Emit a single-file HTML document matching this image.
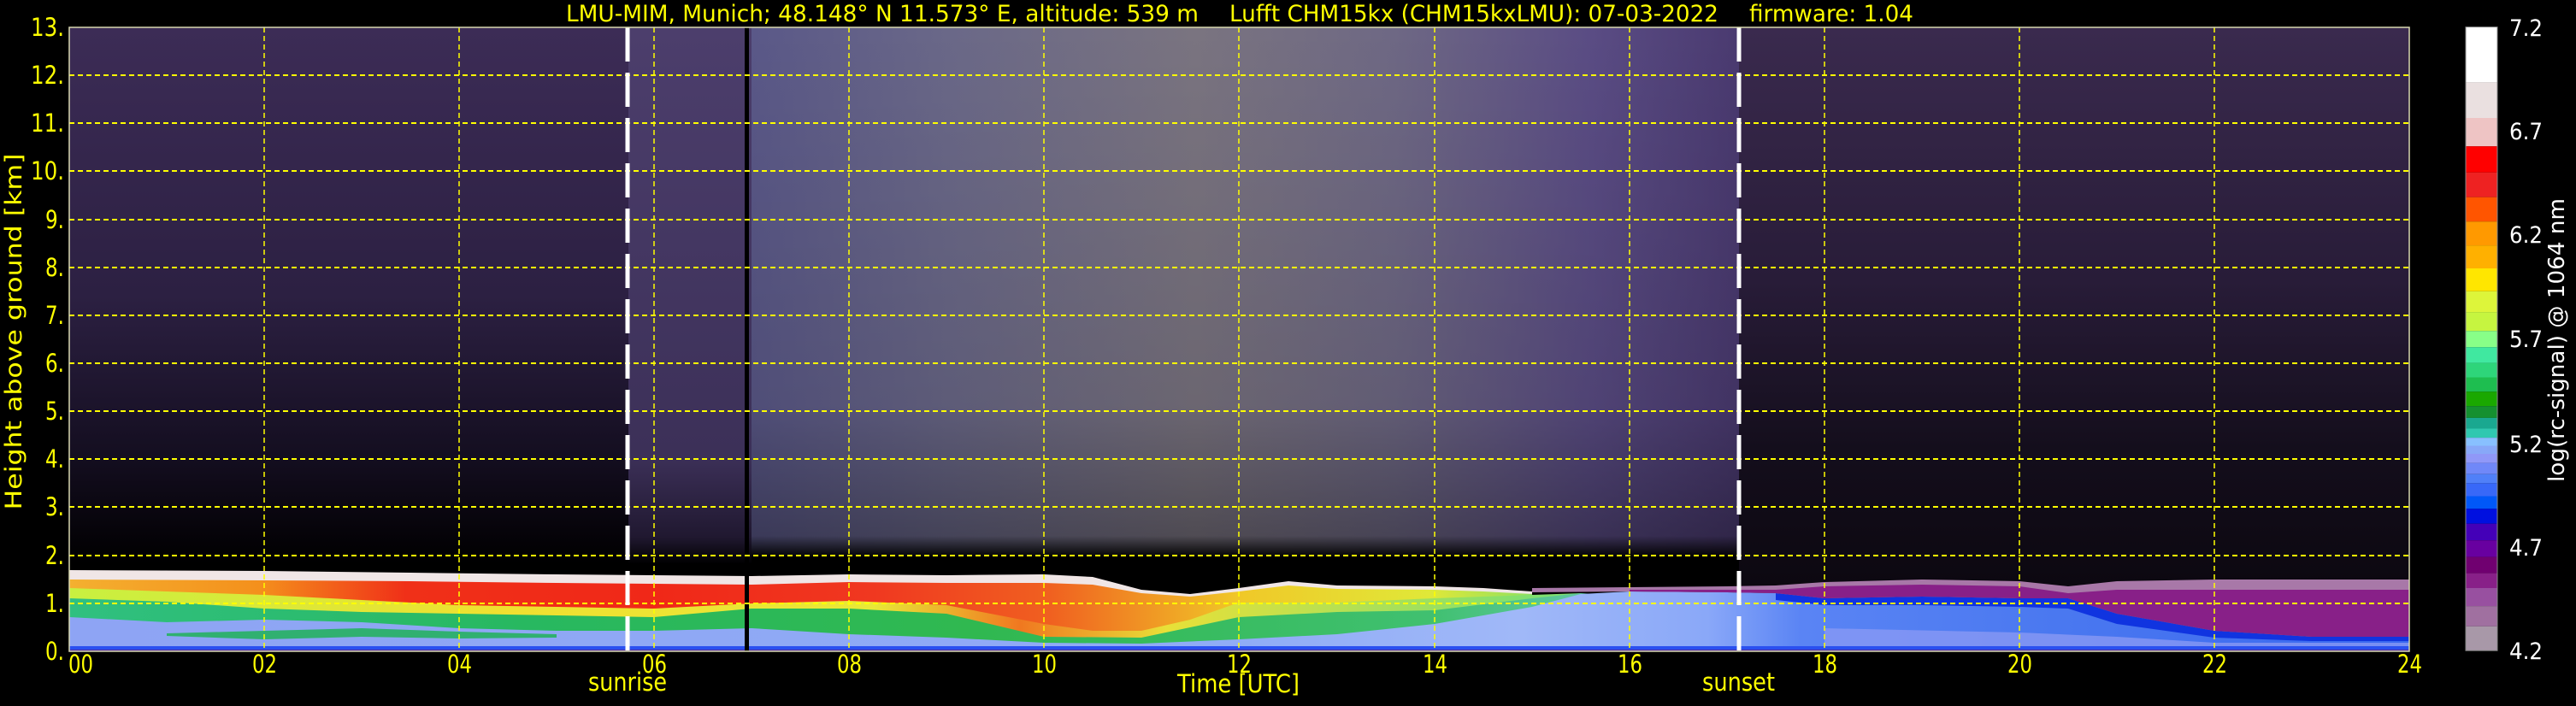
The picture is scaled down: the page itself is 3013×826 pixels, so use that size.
<!DOCTYPE html>
<html><head><meta charset="utf-8"><style>
html,body{margin:0;padding:0;background:#000;width:3013px;height:826px;overflow:hidden}
svg{display:block}
text{font-family:"DejaVu Sans","Liberation Sans",sans-serif}
</style></head><body>
<svg width="3013" height="826" viewBox="0 0 3013 826" xmlns="http://www.w3.org/2000/svg">
<defs>
<linearGradient id="mid" x1="879" x2="2034" y1="0" y2="0" gradientUnits="userSpaceOnUse">
<stop offset="0" stop-color="#5a5888"/><stop offset="0.2" stop-color="#6a6888"/>
<stop offset="0.45" stop-color="#7a7480"/><stop offset="0.65" stop-color="#6e6884"/>
<stop offset="0.85" stop-color="#5a4c84"/><stop offset="1" stop-color="#4a3a70"/>
</linearGradient>
<linearGradient id="vdark" x1="0" x2="0" y1="32" y2="665" gradientUnits="userSpaceOnUse">
<stop offset="0" stop-color="#000" stop-opacity="0"/><stop offset="0.7" stop-color="#000" stop-opacity="0.12"/>
<stop offset="0.94" stop-color="#000" stop-opacity="0.35"/><stop offset="0.98" stop-color="#000" stop-opacity="1"/>
<stop offset="1" stop-color="#000" stop-opacity="1"/>
</linearGradient>
<linearGradient id="night" x1="0" x2="0" y1="32" y2="660" gradientUnits="userSpaceOnUse">
<stop offset="0" stop-color="#3c2c56"/><stop offset="0.5" stop-color="#2c2042"/>
<stop offset="0.8" stop-color="#140e20"/><stop offset="0.95" stop-color="#050308"/><stop offset="1" stop-color="#000"/>
</linearGradient>
<linearGradient id="dawn" x1="0" x2="0" y1="32" y2="660" gradientUnits="userSpaceOnUse">
<stop offset="0" stop-color="#4c3e6c"/><stop offset="0.8" stop-color="#3c3058"/>
<stop offset="0.95" stop-color="#201830"/><stop offset="1" stop-color="#000"/>
</linearGradient>
<linearGradient id="eve" x1="0" x2="0" y1="32" y2="690" gradientUnits="userSpaceOnUse">
<stop offset="0" stop-color="#3a2a4e"/><stop offset="0.45" stop-color="#281c38"/>
<stop offset="0.75" stop-color="#140e1c"/><stop offset="1" stop-color="#0c0810"/>
</linearGradient>
<linearGradient id="red" x1="81" x2="1792" y1="0" y2="0" gradientUnits="userSpaceOnUse">
<stop offset="0" stop-color="#f4b030"/><stop offset="0.13" stop-color="#f4901c"/>
<stop offset="0.23" stop-color="#f03018"/><stop offset="0.4" stop-color="#f02818"/>
<stop offset="0.55" stop-color="#f03820"/><stop offset="0.67" stop-color="#f06020"/>
<stop offset="0.8" stop-color="#f0c828"/><stop offset="0.93" stop-color="#e0e838"/>
<stop offset="1" stop-color="#90e060"/>
</linearGradient>
<linearGradient id="yel" x1="81" x2="1792" y1="0" y2="0" gradientUnits="userSpaceOnUse">
<stop offset="0" stop-color="#c8f040"/><stop offset="0.3" stop-color="#f0e030"/>
<stop offset="0.55" stop-color="#e8e838"/><stop offset="0.65" stop-color="#f07820"/>
<stop offset="0.75" stop-color="#e8e038"/><stop offset="1" stop-color="#80e070"/>
</linearGradient>
<linearGradient id="grn" x1="81" x2="1850" y1="0" y2="0" gradientUnits="userSpaceOnUse">
<stop offset="0" stop-color="#30c080"/><stop offset="0.3" stop-color="#28b860"/>
<stop offset="0.6" stop-color="#30b850"/><stop offset="0.9" stop-color="#40c070"/><stop offset="1" stop-color="#60c8a0"/>
</linearGradient>
<linearGradient id="lav" x1="81" x2="2818" y1="0" y2="0" gradientUnits="userSpaceOnUse">
<stop offset="0" stop-color="#8ea4f4"/><stop offset="0.5" stop-color="#90acf6"/>
<stop offset="0.62" stop-color="#a0b8f8"/><stop offset="0.7" stop-color="#8aa8f8"/>
<stop offset="0.74" stop-color="#5a84f4"/><stop offset="0.85" stop-color="#4a78f0"/><stop offset="1" stop-color="#3a68f0"/>
</linearGradient>
</defs>

<rect x="81" y="32" width="654" height="730" fill="url(#night)"/>
<rect x="735" y="32" width="144" height="730" fill="url(#dawn)"/>
<rect x="879" y="32" width="1155" height="730" fill="url(#mid)"/>
<rect x="879" y="32" width="1155" height="730" fill="url(#vdark)"/>
<rect x="2034" y="32" width="784" height="730" fill="url(#eve)"/>

<polygon fill="#f0e6e6" points="81,667 309,668 480,670 651,672 765,673 879,674 993,672 1107,673 1221,672 1278,675 1335,690 1392,695 1449,688 1507,680 1564,685 1678,686 1735,688 1792,692 1792,762 81,762"/>
<polygon fill="url(#red)" points="81,678 309,679 480,680 651,682 765,683 879,684 993,681 1107,682 1221,682 1278,684 1335,694 1392,698 1449,692 1507,685 1564,689 1678,690 1735,692 1792,695 1792,762 81,762"/>
<polygon fill="url(#yel)" points="81,688 309,696 423,702 537,708 651,710 765,712 879,706 993,703 1107,708 1221,730 1278,738 1335,738 1392,725 1449,705 1564,705 1678,700 1792,696 1849,694 1849,762 81,762"/>
<polygon fill="url(#grn)" points="81,700 195,704 309,712 423,716 537,718 651,720 765,722 879,712 993,712 1107,718 1221,745 1335,746 1449,722 1564,716 1678,714 1792,700 1849,694 1906,698 1906,762 81,762"/>
<polygon fill="url(#lav)" points="81,722 195,728 309,725 423,728 537,735 651,738 765,738 879,735 993,742 1107,746 1221,752 1335,753 1449,748 1564,742 1678,730 1735,720 1792,710 1849,695 1906,692 2020,693 2077,694 2134,700 2248,698 2362,700 2419,700 2476,718 2590,738 2704,745 2818,745 2818,762 81,762"/>
<polygon fill="#30b070" points="309,738 423,735 537,739 651,742 651,746 537,747 423,745 309,748 195,744 195,741"/>
<polygon fill="#8898f4" opacity="0.8" points="2134,735 2362,740 2476,745 2590,752 2818,752 2818,757 2134,757"/>
<polygon fill="#1034e0" points="2077,694 2134,700 2248,698 2362,700 2419,700 2476,718 2590,738 2704,745 2818,745 2818,750 2704,750 2590,746 2476,730 2419,712 2362,710 2248,708 2134,708 2077,702"/>
<polygon fill="#a878a8" points="1792,688 1906,687 2020,686 2077,685 2134,681 2248,678 2362,680 2419,686 2476,680 2590,678 2704,678 2818,678 2818,745 2704,745 2590,738 2476,718 2419,700 2362,700 2248,698 2134,700 2077,694 2020,693 1906,692 1792,693"/>
<polygon fill="#882088" points="1906,690 2020,690 2077,690 2134,686 2248,684 2362,686 2419,694 2476,690 2590,690 2704,690 2818,690 2818,745 2704,745 2590,738 2476,718 2419,700 2362,700 2248,698 2134,700 2077,694 2020,693 1906,692"/>
<rect x="81" y="756" width="2737" height="6" fill="#2a50f0"/>
<rect x="81" y="760" width="2737" height="2" fill="#5030a0"/>

<rect x="871" y="32" width="5" height="730" fill="#000"/>

<g stroke="#ffff00" stroke-width="1.5" stroke-dasharray="6,4" fill="none">
<path d="M309 32V762M537 32V762M765 32V762M993 32V762M1221 32V762M1449 32V762M1678 32V762M1906 32V762M2134 32V762M2362 32V762M2590 32V762"/>
<path d="M81 706H2818M81 650H2818M81 593H2818M81 537H2818M81 481H2818M81 425H2818M81 369H2818M81 313H2818M81 257H2818M81 200H2818M81 144H2818M81 88H2818" stroke-width="2"/>
</g>
<g stroke="#fff" stroke-width="5" stroke-dasharray="40,13">
<path d="M734 32V762M2034 32V762"/>
</g>
<rect x="81" y="32" width="2737" height="730" fill="none" stroke="#d8d8b0" stroke-width="1.5"/>

<g fill="#ffff00" font-size="27">
<text x="662" y="25" textLength="740" lengthAdjust="spacingAndGlyphs">LMU-MIM, Munich; 48.148° N 11.573° E, altitude: 539 m</text>
<text x="1438" y="25" textLength="572" lengthAdjust="spacingAndGlyphs">Lufft CHM15kx (CHM15kxLMU): 07-03-2022</text>
<text x="2046" y="25" textLength="192" lengthAdjust="spacingAndGlyphs">firmware: 1.04</text>
</g>
<g fill="#ffff00" font-size="29">
<text x="36" y="42" textLength="39" lengthAdjust="spacingAndGlyphs">13.</text>
<text x="36" y="98" textLength="39" lengthAdjust="spacingAndGlyphs">12.</text>
<text x="36" y="154" textLength="39" lengthAdjust="spacingAndGlyphs">11.</text>
<text x="36" y="210" textLength="39" lengthAdjust="spacingAndGlyphs">10.</text>
<text x="53" y="267" textLength="22" lengthAdjust="spacingAndGlyphs">9.</text>
<text x="53" y="323" textLength="22" lengthAdjust="spacingAndGlyphs">8.</text>
<text x="53" y="379" textLength="22" lengthAdjust="spacingAndGlyphs">7.</text>
<text x="53" y="435" textLength="22" lengthAdjust="spacingAndGlyphs">6.</text>
<text x="53" y="491" textLength="22" lengthAdjust="spacingAndGlyphs">5.</text>
<text x="53" y="547" textLength="22" lengthAdjust="spacingAndGlyphs">4.</text>
<text x="53" y="603" textLength="22" lengthAdjust="spacingAndGlyphs">3.</text>
<text x="53" y="660" textLength="22" lengthAdjust="spacingAndGlyphs">2.</text>
<text x="53" y="716" textLength="22" lengthAdjust="spacingAndGlyphs">1.</text>
<text x="53" y="772" textLength="22" lengthAdjust="spacingAndGlyphs">0.</text>
</g>
<text transform="translate(25,388) rotate(-90)" fill="#ffff00" font-size="27" text-anchor="middle" textLength="417" lengthAdjust="spacingAndGlyphs">Height above ground [km]</text>
<g fill="#ffff00" font-size="29">
<text x="80" y="787" textLength="29" lengthAdjust="spacingAndGlyphs">00</text>
<text x="295" y="787" textLength="29" lengthAdjust="spacingAndGlyphs">02</text>
<text x="523" y="787" textLength="29" lengthAdjust="spacingAndGlyphs">04</text>
<text x="751" y="787" textLength="29" lengthAdjust="spacingAndGlyphs">06</text>
<text x="979" y="787" textLength="29" lengthAdjust="spacingAndGlyphs">08</text>
<text x="1207" y="787" textLength="29" lengthAdjust="spacingAndGlyphs">10</text>
<text x="1435" y="787" textLength="29" lengthAdjust="spacingAndGlyphs">12</text>
<text x="1664" y="787" textLength="29" lengthAdjust="spacingAndGlyphs">14</text>
<text x="1892" y="787" textLength="29" lengthAdjust="spacingAndGlyphs">16</text>
<text x="2120" y="787" textLength="29" lengthAdjust="spacingAndGlyphs">18</text>
<text x="2348" y="787" textLength="29" lengthAdjust="spacingAndGlyphs">20</text>
<text x="2576" y="787" textLength="29" lengthAdjust="spacingAndGlyphs">22</text>
<text x="2804" y="787" textLength="29" lengthAdjust="spacingAndGlyphs">24</text>
<text x="688" y="808" textLength="92" lengthAdjust="spacingAndGlyphs">sunrise</text>
<text x="1991" y="808" textLength="85" lengthAdjust="spacingAndGlyphs">sunset</text>
<text x="1377" y="810" textLength="143" lengthAdjust="spacingAndGlyphs">Time [UTC]</text>
</g>

<g>
<rect x="2884" y="31.6" width="37" height="64.8" fill="#ffffff"/>
<rect x="2884" y="96.4" width="37" height="41.6" fill="#eae0e0"/>
<rect x="2884" y="138" width="37" height="33.2" fill="#eec4c4"/>
<rect x="2884" y="171.2" width="37" height="30.6" fill="#ff0000"/>
<rect x="2884" y="201.8" width="37" height="28.9" fill="#ee2222"/>
<rect x="2884" y="230.7" width="37" height="28.5" fill="#ff5500"/>
<rect x="2884" y="259.2" width="37" height="27.9" fill="#ff9900"/>
<rect x="2884" y="287.1" width="37" height="26.9" fill="#ffb000"/>
<rect x="2884" y="314" width="37" height="26.8" fill="#ffe600"/>
<rect x="2884" y="340.8" width="37" height="24.3" fill="#ddf53a"/>
<rect x="2884" y="365.1" width="37" height="22.1" fill="#c6f540"/>
<rect x="2884" y="387.2" width="37" height="19" fill="#88ff88"/>
<rect x="2884" y="406.2" width="37" height="18.4" fill="#40e8a0"/>
<rect x="2884" y="424.6" width="37" height="16.9" fill="#2ed57a"/>
<rect x="2884" y="441.5" width="37" height="16.8" fill="#1ebe50"/>
<rect x="2884" y="458.3" width="37" height="16.9" fill="#1aa800"/>
<rect x="2884" y="475.2" width="37" height="13.7" fill="#159030"/>
<rect x="2884" y="488.9" width="37" height="12.6" fill="#1aa890"/>
<rect x="2884" y="501.5" width="37" height="10.6" fill="#30c8b0"/>
<rect x="2884" y="512.1" width="37" height="9.4" fill="#88c0ff"/>
<rect x="2884" y="521.5" width="37" height="9.5" fill="#88a8f8"/>
<rect x="2884" y="531" width="37" height="10.6" fill="#9098f8"/>
<rect x="2884" y="541.6" width="37" height="13.1" fill="#7088f8"/>
<rect x="2884" y="554.7" width="37" height="10.6" fill="#5080f8"/>
<rect x="2884" y="565.3" width="37" height="15.2" fill="#3868f8"/>
<rect x="2884" y="580.5" width="37" height="14.8" fill="#0058f8"/>
<rect x="2884" y="595.3" width="37" height="17.4" fill="#0010e0"/>
<rect x="2884" y="612.7" width="37" height="19.5" fill="#4400b8"/>
<rect x="2884" y="632.2" width="37" height="19.4" fill="#6800a0"/>
<rect x="2884" y="651.6" width="37" height="19" fill="#700070"/>
<rect x="2884" y="670.6" width="37" height="17.4" fill="#882088"/>
<rect x="2884" y="688" width="37" height="21.1" fill="#9850a0"/>
<rect x="2884" y="709.1" width="37" height="23.7" fill="#a070a0"/>
<rect x="2884" y="732.8" width="37" height="28.4" fill="#a898a8"/>
<rect x="2884" y="31.6" width="37" height="729.6" fill="none" stroke="#888" stroke-width="1"/>
</g>
<g fill="#ffffff" font-size="27">
<text x="2935" y="42" textLength="39" lengthAdjust="spacingAndGlyphs">7.2</text>
<text x="2935" y="163" textLength="39" lengthAdjust="spacingAndGlyphs">6.7</text>
<text x="2935" y="284" textLength="39" lengthAdjust="spacingAndGlyphs">6.2</text>
<text x="2935" y="406" textLength="39" lengthAdjust="spacingAndGlyphs">5.7</text>
<text x="2935" y="529" textLength="39" lengthAdjust="spacingAndGlyphs">5.2</text>
<text x="2935" y="650" textLength="39" lengthAdjust="spacingAndGlyphs">4.7</text>
<text x="2935" y="771" textLength="39" lengthAdjust="spacingAndGlyphs">4.2</text>
</g>
<text transform="translate(2999,398) rotate(-90)" fill="#ffffff" font-size="26" text-anchor="middle" textLength="332" lengthAdjust="spacingAndGlyphs">log(rc-signal) @ 1064 nm</text>
</svg>
</body></html>
